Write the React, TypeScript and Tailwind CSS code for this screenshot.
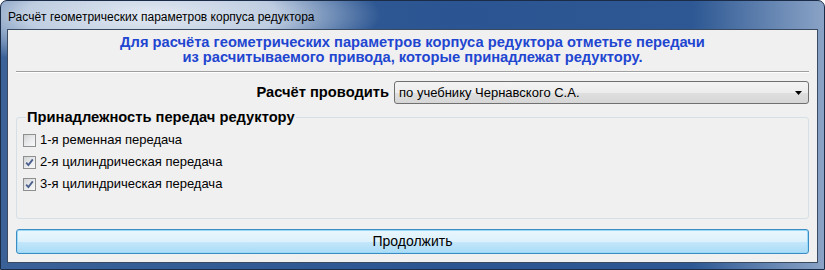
import { ReactNode } from "react";

const Check = ({ checked, children }: { checked?: boolean; children: ReactNode }) => (
  <label className="flex h-[22px] items-center gap-[4px] text-[13px] text-black">
    <span className="flex size-[13px] items-center justify-center border border-[#8e8f8f] bg-[linear-gradient(135deg,#d2d4d6_0%,#eceeef_60%,#f8f9f9_100%)]">
      {checked && (
        <svg width="9" height="9" viewBox="0 0 9 9">
          <path d="M1.2 4.6 L3.4 7 L7.8 1.4" fill="none" stroke="#4a5f8e" strokeWidth="1.8" />
        </svg>
      )}
    </span>
    <span>{children}</span>
  </label>
);

export default function App() {
  return (
    <div className="h-[270px] w-[825px] bg-white font-['Liberation_Sans',Arial,sans-serif]">
      <div className="flex h-full flex-col rounded-t-[7px] border border-[#1a2c48] bg-[radial-gradient(ellipse_230px_55px_at_150px_14px,rgba(226,233,242,1)_0%,rgba(205,217,233,0.9)_55%,rgba(205,217,233,0)_100%),linear-gradient(90deg,#3a6298_0%,#2b5592_55%,#2d5893_84%,#8aa3c6_100%)] px-[6px] pb-[6px]">
        <div className="flex h-[28px] items-center pl-[1px] pt-[3px] text-[12px] text-black">
          Расчёт геометрических параметров корпуса редуктора
        </div>

        <div className="flex flex-1 flex-col border border-[#3a4a60] bg-[#f0f0f0] px-[8px]">
          <div className="mt-[5px] text-center text-[14.7px] font-bold leading-[15px] text-[#1f46d1]">
            <div>Для расчёта геометрических параметров корпуса редуктора отметьте передачи</div>
            <div>из расчитываемого привода, которые принадлежат редуктору.</div>
          </div>

          <div className="mt-[6px] border-t border-b border-t-[#a0a0a0] border-b-white" />

          <div className="mt-[8px] flex h-[23px] items-center justify-end gap-[5px]">
            <span className="text-[14.7px] font-bold text-black">Расчёт проводить</span>
            <div className="flex h-full w-[415px] items-center justify-between rounded-[3px] border border-[#707070] bg-[linear-gradient(180deg,#f4f4f4_0%,#ececec_50%,#dfdfdf_51%,#d6d6d6_100%)] pl-[4px] pr-[6px] text-[13px] text-black">
              <span>по учебнику Чернавского С.А.</span>
              <svg width="7" height="4" viewBox="0 0 7 4">
                <path d="M0 0 H7 L3.5 4 Z" fill="#000" />
              </svg>
            </div>
          </div>

          <fieldset className="mt-[5px] h-[110px] rounded-[3px] border border-[#d5dfe5] px-[6px]">
            <legend className="ml-[3px] px-[1px] text-[14.7px] font-bold leading-[16px] text-black">
              Принадлежность передач редуктору
            </legend>
            <div className="mt-[4px] flex flex-col">
              <Check>1-я ременная передача</Check>
              <Check checked>2-я цилиндрическая передача</Check>
              <Check checked>3-я цилиндрическая передача</Check>
            </div>
          </fieldset>

          <button className="mt-[10px] flex h-[25px] items-center justify-center rounded-[3px] border border-[#3c8cc4] bg-[linear-gradient(180deg,#eaf6fd_0%,#dcf1fc_50%,#c4e7fb_51%,#a9dbf6_100%)] text-[14px] text-black shadow-[inset_0_0_0_1px_#9ad9f7]">
            Продолжить
          </button>
        </div>
      </div>
    </div>
  );
}
